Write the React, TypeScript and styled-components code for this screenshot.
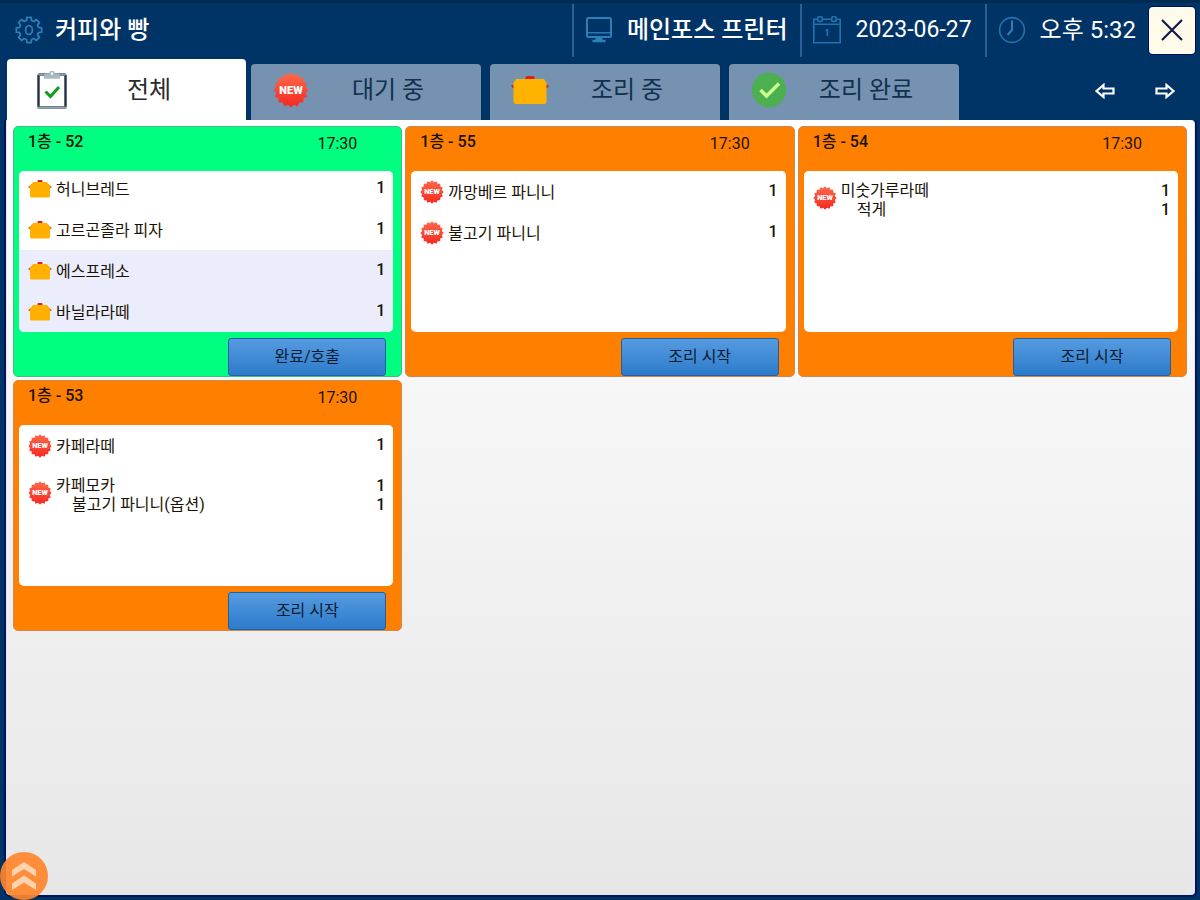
import React from "react";
import styled, { createGlobalStyle, css } from "styled-components";

const Global = createGlobalStyle`
  * { box-sizing: border-box; }
  body {
    margin: 0;
    background: #003366;
    font-family: Roboto, "Noto Sans CJK KR", sans-serif;
    color: #1a1a1a;
  }
  button { font: inherit; color: inherit; border: 0; padding: 0; cursor: pointer; }
  ul { list-style: none; margin: 0; padding: 0; }
`;

const Screen = styled.div`
  min-height: 100vh;
  display: flex;
  flex-direction: column;
  padding: 0 5px 5px 6px;
  border-top: 3px solid #002a52;
`;

const TopBar = styled.header`
  display: flex;
  justify-content: space-between;
  align-items: center;
  height: 54px;
  color: #fff;
  font-size: 24px;
  font-weight: 500;
  line-height: 32px;
`;

const Shop = styled.h1`
  display: flex;
  align-items: center;
  gap: 12px;
  margin: 0;
  padding-left: 9px;
  font: inherit;
`;

const StatusGroup = styled.div`
  display: flex;
  align-items: center;
`;

const Status = styled.div<{ $compact?: boolean }>`
  display: flex;
  align-items: center;
  gap: 14px;
  height: 53px;
  padding: 0 13px 0 11px;
  border-left: 2px solid #2c5f94;
  font-size: ${(p) => (p.$compact ? 23 : 24)}px;
  white-space: nowrap;

  time {
    font-weight: 400;
  }
`;

const CloseButton = styled.button`
  display: grid;
  place-items: center;
  width: 46px;
  height: 47px;
  border-radius: 4px;
  background: #fffbea;
  box-shadow: 0 0 0 1px #00105c;
`;

const NavRow = styled.nav`
  display: flex;
  justify-content: space-between;
  align-items: flex-end;
  height: 63px;
  padding-left: 1px;
`;

const Tabs = styled.div`
  display: flex;
  align-items: flex-end;
  gap: 9px;
`;

const Tab = styled.button<{ $active?: boolean }>`
  display: grid;
  grid-template-columns: 80px 1fr;
  place-items: center;
  width: 230px;
  height: 56px;
  padding: 0 36px 4px 0;
  border-radius: 4px 4px 0 0;
  background: #7592b0;
  color: #12304f;
  font-size: 24px;
  line-height: 32px;
  white-space: nowrap;
  ${(p) =>
    p.$active &&
    css`
      width: 239px;
      height: 61px;
      margin-right: -4px;
      padding: 0 40px 0 5px;
      background: #fff;
      color: #2b2b2b;
    `}
`;

const Pager = styled.div`
  display: flex;
  gap: 20px;
  padding-right: 10px;
  padding-bottom: 9px;
`;

const PageButton = styled.button`
  display: grid;
  place-items: center;
  width: 40px;
  height: 40px;
  background: none;
`;

const Board = styled.main`
  flex: 1;
  padding: 5px 7px 16px 6px;
  border: 1px solid #e4e6f4;
  border-top-color: #fff;
  border-radius: 0 4px 4px 4px;
  background: linear-gradient(#ffffff, #e7e7e7);
  box-shadow: 0 0 0 2px #00145c;
  clip-path: inset(0 -4px -4px -4px);
`;

const Orders = styled.div`
  display: grid;
  grid-template-columns: repeat(3, 1fr);
  gap: 3px;
`;

const Card = styled.article<{ $cooking?: boolean }>`
  display: flex;
  flex-direction: column;
  padding: 0 8px 0 5px;
  border: 1px solid ${(p) => (p.$cooking ? "#3fbf86" : "#c98a55")};
  border-radius: 5px;
  background: ${(p) => (p.$cooking ? "#00ff80" : "#ff8000")};
  font-size: 16px;
  color: #1a1206;
`;

const CardHead = styled.header`
  display: flex;
  justify-content: space-between;
  height: 44px;
  padding: 5px 36px 0 9px;
  line-height: 24px;
`;

const Seat = styled.h2`
  margin: 0;
  font-size: 16px;
  font-weight: 500;
  line-height: 20px;
`;

const Lines = styled.ul<{ $scrolled?: boolean }>`
  display: flex;
  flex-direction: column;
  justify-content: ${(p) => (p.$scrolled ? "flex-end" : "flex-start")};
  height: 161px;
  overflow: hidden;
  border-radius: 5px;
  background: #fff;
`;

const Line = styled.li<{ $tall?: boolean; $marked?: boolean }>`
  flex: none;
  display: grid;
  grid-template-columns: 24px 1fr auto;
  column-gap: 4px;
  align-items: center;
  height: ${(p) => (p.$tall ? 54 : 41)}px;
  padding: 0 8px 0 9px;
  background: ${(p) => (p.$marked ? "#ebedfd" : "#fff")};
  line-height: 19px;
`;

const Names = styled.div<{ $tall?: boolean }>`
  padding-top: ${(p) => (p.$tall ? 4 : 2)}px;
`;

const Option = styled.div`
  padding-left: 16px;
`;

const Counts = styled.div<{ $tall?: boolean }>`
  padding: ${(p) => (p.$tall ? "4px 0 0" : "0 0 2px")};
  text-align: right;
  font-weight: 500;
`;

const CardFoot = styled.footer`
  display: flex;
  justify-content: flex-end;
  height: 44px;
  padding: 6px 7px 0 0;
`;

const ActionButton = styled.button`
  width: 158px;
  height: 38px;
  border: 1px solid #1f5fa5;
  border-radius: 3px;
  background: linear-gradient(#559be0, #2e7bcb);
  color: #0c1c30;
  line-height: 20px;
`;

const ScrollUp = styled.button`
  position: fixed;
  left: 0;
  bottom: 0;
  display: grid;
  place-items: center;
  width: 48px;
  height: 48px;
  border-radius: 50%;
  background: rgba(255, 134, 44, 0.92);
`;

const polar = (c: number, r: number, a: number) =>
  `${(c + r * Math.cos(a)).toFixed(2)},${(c + r * Math.sin(a)).toFixed(2)}`;

const burst = Array.from({ length: 32 }, (_, i) =>
  polar(18, i % 2 ? 15 : 17.5, (i * Math.PI) / 16 - Math.PI / 2)
).join(" ");

const cog = Array.from({ length: 8 }, (_, i) => {
  const a = (i * Math.PI) / 4 - Math.PI / 2;
  return [
    polar(14, 9.8, a - 0.26),
    polar(14, 12.8, a - 0.17),
    polar(14, 12.8, a + 0.17),
    polar(14, 9.8, a + 0.26),
  ].join(" ");
}).join(" ");

const LINE_BLUE = "#2272ae";

const GearIcon = () => (
  <svg width="28" height="28" viewBox="0 0 28 28" fill="none" stroke="#2d7fb8" strokeWidth="1.8" strokeLinejoin="round">
    <polygon points={cog} />
    <ellipse cx="14" cy="14" rx="3.4" ry="4.4" />
  </svg>
);

const MonitorIcon = () => (
  <svg width="28" height="28" viewBox="0 0 28 28" fill="none" stroke="#2d7fb8" strokeWidth="2">
    <rect x="2" y="2" width="24" height="19" rx="1.5" />
    <path d="M2 16.8h24" strokeWidth="1.4" />
    <path d="M10.5 21h7v2.7h3v2.6H7.5v-2.6h3z" fill="#2d7fb8" stroke="none" />
  </svg>
);

const CalendarIcon = () => (
  <svg width="28" height="28" viewBox="0 0 28 28" fill="none" stroke={LINE_BLUE} strokeWidth="1.6">
    <path d="M4.5 3.2H.8v23.6h26.4V3.2h-3.7M9.5 3.2h9M.8 8.2h26.4" />
    <rect x="4.8" y=".8" width="4.4" height="4.6" rx="1" />
    <rect x="18.8" y=".8" width="4.4" height="4.6" rx="1" />
    <path d="M12.6 14.8l1.8-1v6.4" />
  </svg>
);

const ClockIcon = () => (
  <svg width="28" height="28" viewBox="0 0 28 28" fill="none" stroke={LINE_BLUE} strokeWidth="1.6">
    <circle cx="14" cy="14" r="12.4" />
    <path d="M14 4.5V14l-4.5 5" strokeWidth="2" stroke="#2d7fb8" />
  </svg>
);

const CloseIcon = () => (
  <svg width="22" height="22" viewBox="0 0 22 22" stroke="#14194a" strokeWidth="2.2">
    <path d="M1 1l20 20M21 1L1 21" />
  </svg>
);

const ArrowIcon = ({ flip }: { flip?: boolean }) => (
  <svg width="20" height="16" viewBox="0 0 20 16" fill="none" stroke="#fff" strokeWidth="2.2" strokeLinejoin="miter">
    <path d={flip ? "M18.5 8L11.5 2v3.5H1.5v5h10V14z" : "M1.5 8l7-6v3.5h10v5h-10V14z"} />
  </svg>
);

const ClipboardIcon = () => (
  <svg width="30" height="40" viewBox="0 0 30 40">
    <rect x="1.5" y="4.5" width="27" height="33" rx="1.5" fill="#fff" stroke="#1d2f45" strokeWidth="2.4" />
    <path d="M1.5 37.6h27" stroke="#8fa3ad" strokeWidth="2.4" strokeLinecap="round" />
    <path d="M2 4.5h26" stroke="#8fa3ad" strokeWidth="2" strokeLinecap="round" />
    <path d="M8 3.5h4.2a2.8 2.8 0 0 1 5.6 0H22l1 3v2.3H7V6.5z" fill="#a9b9c1" />
    <circle cx="15" cy="3.6" r="1.3" fill="#fff" />
    <path d="M8.5 21.5l5 5 8.5-9.5" fill="none" stroke="#0f9d1c" strokeWidth="3" />
  </svg>
);

const NewIcon = ({ size }: { size: number }) => (
  <svg width={size} height={size} viewBox="0 0 36 36">
    <defs>
      <linearGradient id="newBadge" x1="0" y1="0" x2="0" y2="1">
        <stop offset="0" stopColor="#ff6a4d" />
        <stop offset="1" stopColor="#f4281f" />
      </linearGradient>
    </defs>
    <polygon points={burst} fill="url(#newBadge)" />
    <text x="18" y="21.7" textAnchor="middle" fontFamily="Roboto, sans-serif" fontWeight="900" fontSize="11" fill="#fff">
      NEW
    </text>
  </svg>
);

const PotIcon = ({ wide }: { wide?: boolean }) =>
  wide ? (
    <svg width="38" height="30" viewBox="0 0 38 30">
      <rect x="14.5" y="1" width="9" height="4" rx="1.5" fill="#d9231a" />
      <path d="M0 10h4v3H1.5zM38 10h-4v3h2.5z" fill="#d9231a" />
      <path d="M5 4h28l2.5 4v18.5a2.5 2.5 0 0 1-2.5 2.5H5a2.5 2.5 0 0 1-2.5-2.5V8z" fill="#ffb300" />
    </svg>
  ) : (
    <svg width="24" height="20" viewBox="0 0 24 20">
      <rect x="9.5" y="1" width="5" height="3" rx="1" fill="#d9231a" />
      <path d="M0 8l4-3v4H1zM24 8l-4-3v4h3z" fill="#e0641a" />
      <path d="M5 3h14l3 4v10a1.5 1.5 0 0 1-1.5 1.5h-17A1.5 1.5 0 0 1 2 17V7z" fill="#ffb000" />
    </svg>
  );

const DoneIcon = () => (
  <svg width="36" height="36" viewBox="0 0 36 36">
    <circle cx="18" cy="18" r="17.2" fill="#4caf50" />
    <path d="M9.5 18l6 6L28 11.5" fill="none" stroke="#ccff90" strokeWidth="3.4" />
  </svg>
);

const ChevronsIcon = () => (
  <svg width="26" height="30" viewBox="0 0 26 30" fill="#ffd3ae">
    <path d="M13 1l12 8v6.5L13 8 1 15.5V9z" />
    <path d="M13 14.5l12 8V29l-12-7.5L1 29v-6.5z" />
  </svg>
);

type Item = { name: string; option?: string; marked?: boolean };
type Order = { seat: string; time: string; cooking?: boolean; items: Item[] };

const orders: Order[] = [
  {
    seat: "1층 - 52",
    time: "17:30",
    cooking: true,
    items: [
      { name: "허니브레드" },
      { name: "고르곤졸라 피자" },
      { name: "에스프레소", marked: true },
      { name: "바닐라라떼", marked: true },
    ],
  },
  { seat: "1층 - 55", time: "17:30", items: [{ name: "까망베르 파니니" }, { name: "불고기 파니니" }] },
  { seat: "1층 - 54", time: "17:30", items: [{ name: "미숫가루라떼", option: "적게" }] },
  {
    seat: "1층 - 53",
    time: "17:30",
    items: [{ name: "카페라떼" }, { name: "카페모카", option: "불고기 파니니(옵션)" }],
  },
];

const OrderCard = ({ order }: { order: Order }) => (
  <Card $cooking={order.cooking}>
    <CardHead>
      <Seat>{order.seat}</Seat>
      <time>{order.time}</time>
    </CardHead>
    <Lines $scrolled={order.items.length > 3}>
      {order.items.map((item) => (
        <Line key={item.name} $tall={!!item.option} $marked={item.marked}>
          {order.cooking ? <PotIcon /> : <NewIcon size={24} />}
          <Names $tall={!!item.option}>
            <div>{item.name}</div>
            {item.option && <Option>{item.option}</Option>}
          </Names>
          <Counts $tall={!!item.option}>
            <div>1</div>
            {item.option && <div>1</div>}
          </Counts>
        </Line>
      ))}
    </Lines>
    <CardFoot>
      <ActionButton type="button">{order.cooking ? "완료/호출" : "조리 시작"}</ActionButton>
    </CardFoot>
  </Card>
);

export default function App() {
  return (
    <>
      <Global />
      <Screen>
        <TopBar>
          <Shop>
            <GearIcon />
            커피와 빵
          </Shop>
          <StatusGroup>
            <Status>
              <MonitorIcon />
              메인포스 프린터
            </Status>
            <Status $compact>
              <CalendarIcon />
              <time>2023-06-27</time>
            </Status>
            <Status>
              <ClockIcon />
              <time>오후 5:32</time>
            </Status>
            <CloseButton type="button" aria-label="닫기">
              <CloseIcon />
            </CloseButton>
          </StatusGroup>
        </TopBar>
        <NavRow>
          <Tabs role="tablist">
            <Tab type="button" role="tab" aria-selected="true" $active>
              <ClipboardIcon />
              전체
            </Tab>
            <Tab type="button" role="tab" aria-selected="false">
              <NewIcon size={36} />
              대기 중
            </Tab>
            <Tab type="button" role="tab" aria-selected="false">
              <PotIcon wide />
              조리 중
            </Tab>
            <Tab type="button" role="tab" aria-selected="false">
              <DoneIcon />
              조리 완료
            </Tab>
          </Tabs>
          <Pager>
            <PageButton type="button" aria-label="이전">
              <ArrowIcon />
            </PageButton>
            <PageButton type="button" aria-label="다음">
              <ArrowIcon flip />
            </PageButton>
          </Pager>
        </NavRow>
        <Board>
          <Orders>
            {orders.map((order) => (
              <OrderCard key={order.seat} order={order} />
            ))}
          </Orders>
        </Board>
        <ScrollUp type="button" aria-label="위로">
          <ChevronsIcon />
        </ScrollUp>
      </Screen>
    </>
  );
}
